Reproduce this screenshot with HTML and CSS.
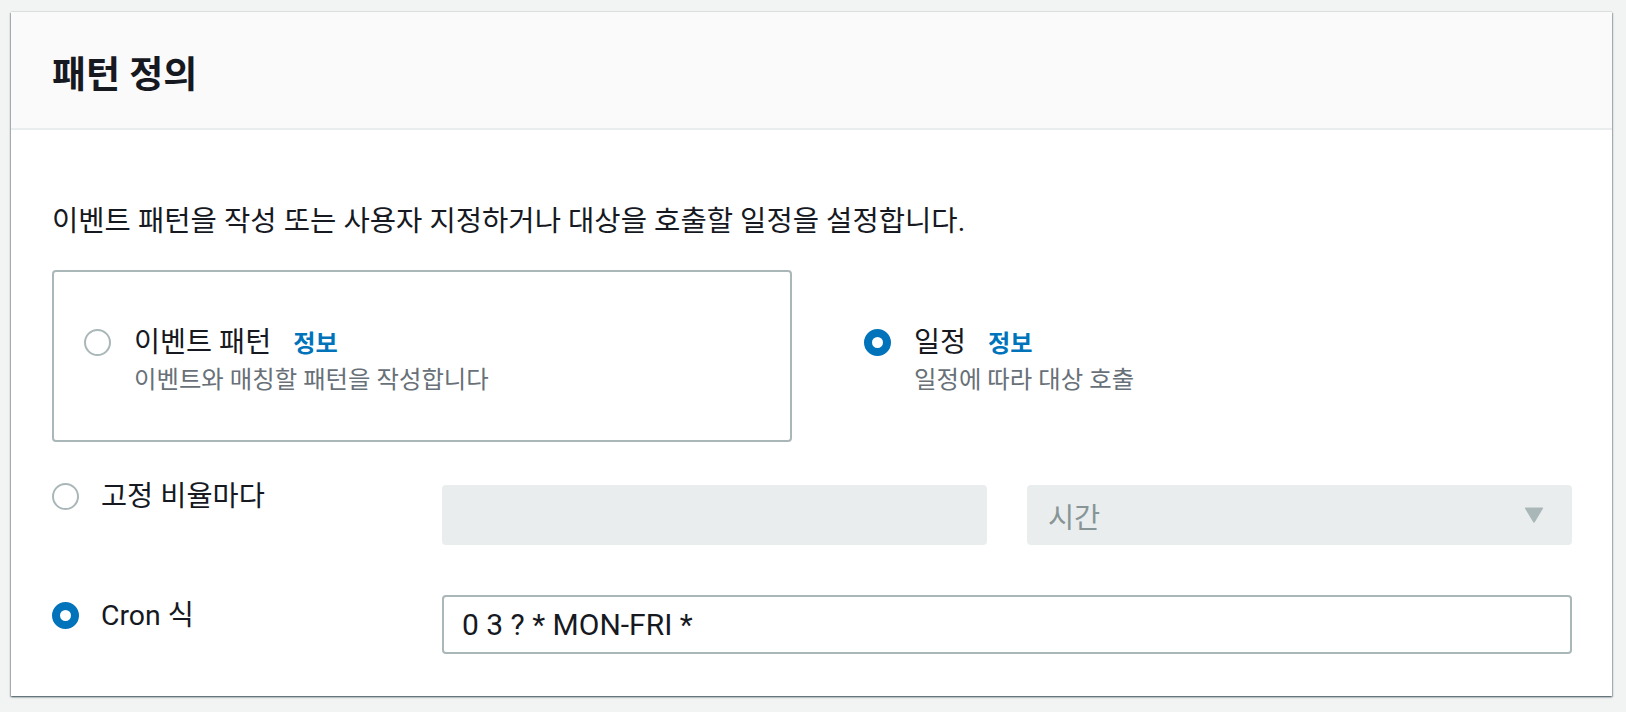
FILE: index.html
```html
<!DOCTYPE html>
<html lang="ko">
<head>
<meta charset="utf-8">
<title>패턴 정의</title>
<link rel="stylesheet" href="styles.css">
</head>
<body>
<div class="page">
  <section class="panel">
    <header class="panel-header">
      <h2 class="panel-title">패턴 정의</h2>
    </header>
    <div class="panel-body">
      <p class="desc">이벤트 패턴을 작성 또는 사용자 지정하거나 대상을 호출할 일정을 설정합니다.</p>
      <div class="tiles">
        <div class="tile tile-bordered">
          <span class="radio"></span>
          <div class="tile-text">
            <div class="tile-label">이벤트 패턴<a class="info">정보</a></div>
            <div class="tile-sub">이벤트와 매칭할 패턴을 작성합니다</div>
          </div>
        </div>
        <div class="tile">
          <span class="radio radio-on"></span>
          <div class="tile-text">
            <div class="tile-label">일정<a class="info">정보</a></div>
            <div class="tile-sub">일정에 따라 대상 호출</div>
          </div>
        </div>
      </div>
      <div class="row row-rate">
        <div class="row-label"><span class="radio"></span><span>고정 비율마다</span></div>
        <div class="field field-disabled"></div>
        <div class="field field-disabled field-select"><span>시간</span>
          <svg class="caret" width="20" height="16" viewBox="0 0 20 16"><path d="M1 1.5 Q0.3 0.5 1.6 0.5 H18.4 Q19.7 0.5 19 1.5 L10.9 15 Q10 16.3 9.1 15 Z" fill="#aab7b8"/></svg>
        </div>
      </div>
      <div class="row row-cron">
        <div class="row-label"><span class="radio radio-on"></span><span>Cron 식</span></div>
        <div class="field field-input">0 3 ? * MON-FRI *</div>
      </div>
    </div>
  </section>
</div>
</body>
</html>
```

FILE: styles.css
```css
html, body {
  margin: 0;
  padding: 0;
  background: #f2f3f3;
}
body {
  font-family: Roboto, "Noto Sans CJK KR", sans-serif;
  color: #16191f;
}
.page {
  padding: 12px 14px 17px 11px;
}
.panel {
  background: #ffffff;
  box-shadow: 0 1px 2px rgba(0, 28, 36, 0.55), 1px 1px 1px rgba(0, 28, 36, 0.18), -1px 1px 1px rgba(0, 28, 36, 0.18), 0 -1px 0 rgba(0, 28, 36, 0.06);
}
.panel-header {
  background: #fafafa;
  height: 116px;
  border-bottom: 2px solid #eaeded;
  display: flex;
  align-items: center;
  padding: 0 41px;
}
.panel-title {
  margin: 12px 0 0;
  font-size: 37px;
  font-weight: 700;
  line-height: 44px;
  color: #16191f;
}
.panel-body {
  padding: 74px 40px 42px 41px;
}
.desc {
  margin: 0;
  font-size: 28.6px;
  line-height: 34px;
}
.tiles {
  display: grid;
  grid-template-columns: 1fr 1fr;
  column-gap: 40px;
  margin-top: 32px;
}
.tile {
  height: 172px;
  box-sizing: border-box;
  border: 2px solid transparent;
  border-radius: 4px;
  padding: 53px 30px 0;
  display: flex;
  align-items: flex-start;
  gap: 23px;
}
.tile-bordered {
  border-color: #aab7b8;
}
.radio {
  flex: none;
  width: 27px;
  height: 27px;
  box-sizing: border-box;
  border-radius: 50%;
  border: 2px solid #aab7b8;
  background: #ffffff;
  margin-top: 4px;
}
.radio-on {
  border: 8.5px solid #0073bb;
}
.tile-label {
  font-size: 28.3px;
  line-height: 36px;
}
.info {
  font-size: 24.2px;
  font-weight: 700;
  color: #0073bb;
  margin-left: 22px;
}
.tile-sub {
  font-size: 24.4px;
  line-height: 36px;
  color: #687078;
}
.row {
  display: grid;
  grid-template-columns: 350px 1fr 1fr;
  column-gap: 40px;
  align-items: start;
}
.row-rate {
  margin-top: 33px;
}
.row-cron {
  margin-top: 50px;
}
.row-label {
  display: flex;
  align-items: flex-start;
  gap: 22px;
  font-size: 28.4px;
  line-height: 36px;
}
.row-label .radio {
  margin-top: 4px;
}
.row-rate .row-label {
  margin-top: 4px;
}
.row-cron .row-label {
  margin-top: 3px;
}
.field {
  box-sizing: border-box;
  border-radius: 4px;
}
.field-disabled {
  height: 60px;
  margin-top: 10px;
  background: #eaeded;
  border: 2px solid #eaeded;
}
.field-select {
  display: flex;
  align-items: center;
  justify-content: space-between;
  padding: 0 26px 0 19px;
  font-size: 28.4px;
  color: #879596;
}
.caret {
  display: block;
}
.field-input {
  grid-column: 2 / 4;
  height: 59px;
  border: 2px solid #aab7b8;
  background: #ffffff;
  display: flex;
  align-items: center;
  padding: 0 18px;
  font-size: 30px;
  color: #16191f;
}
```
